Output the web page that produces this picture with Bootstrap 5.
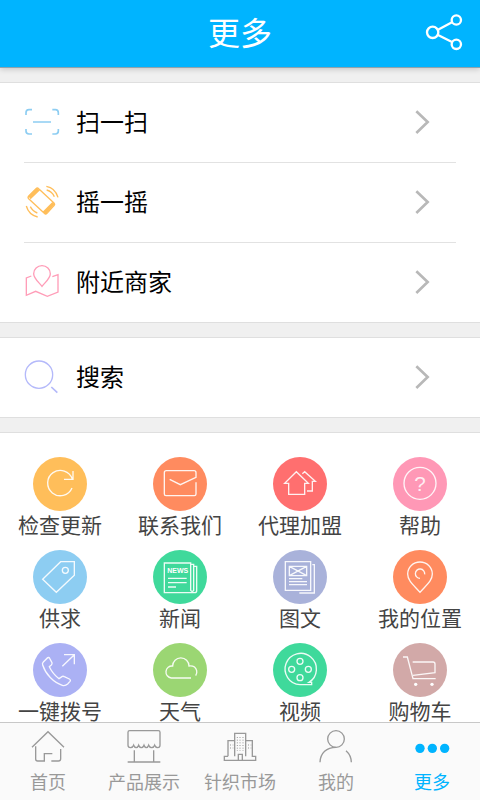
<!DOCTYPE html>
<html lang="zh-CN">
<head>
<meta charset="utf-8">
<meta name="viewport" content="width=device-width, initial-scale=1">
<title>更多</title>
<link href="https://cdn.jsdelivr.net/npm/bootstrap@5.3.0/dist/css/bootstrap.min.css" rel="stylesheet">
<style>
body{font-family:"Liberation Sans","Noto Sans CJK SC",sans-serif;background:#f0f0f0;color:#000}
a{color:inherit;text-decoration:none}
svg{display:block;flex:none;fill:none;stroke:currentColor;stroke-width:4;overflow:visible}
.topbar{background:#00b4ff;color:#fff;height:68px;border-bottom:1px solid #8fa3ad;box-shadow:0 1px 6px rgba(0,0,0,.2);z-index:1}
.topbar h1{font-size:32px;line-height:40px}
.topbar .side{flex:1 1 0}
.share{color:#fff;margin-right:18px}
.share svg{stroke-width:7}
.scroller{min-height:0;overflow-y:auto;scrollbar-width:none;padding-top:14px}
.scroller::-webkit-scrollbar{display:none}
.panel{background:#fff;border-top:1px solid #dfdfdf;border-bottom:1px solid #dfdfdf;margin-bottom:14px}
.entry{height:79px;margin:0 24px;padding-right:24px;font-size:24px;line-height:32px}
.entry + .entry{height:80px;border-top:1px solid #e2e2e2}
.entry svg{margin-bottom:1px}
.ic{width:36px;height:36px}
.chev{width:18px;height:26px;color:#b8b8b8;stroke-width:8}
.apps{padding:24px 0 12px;row-gap:13px;font-size:21px;line-height:22px;color:#444}
.disc{width:54px;height:54px;color:#fff;stroke-width:4;stroke-opacity:.9;margin-bottom:4px}
.disc text{fill:#fff;stroke:none;font-family:"Liberation Sans",sans-serif}
.tabs{background:#fafafa;border-top:1px solid #c8c8c8;color:#999;font-size:18px;line-height:26px;padding:6px 0 4px}
.tabs .ic{margin-bottom:5px}
.tabs .on{color:#00b4ff}
.c-sky{color:#8dcdf2}.c-amber{color:#ffbe5a}.c-rose{color:#ff9db8}.c-lilac{color:#b4b9fa}
.b-amber{background:#ffbe5a}.b-orange{background:#ff8b5f}.b-red{background:#ff6f6f}.b-pink{background:#ff98b6}
.b-sky{background:#8dcdf2}.b-green{background:#3fd99b}.b-blue{background:#a9b2da}.b-lilac{background:#abb1f4}
.b-lime{background:#9bd673}.b-dust{background:#d2a9a8}
</style>
</head>
<body>
<div class="vh-100 d-flex flex-column">
<header class="topbar d-flex align-items-center flex-shrink-0 position-relative">
  <div class="side"></div>
  <h1 class="m-0 fw-normal">更多</h1>
  <div class="side d-flex justify-content-end">
    <button type="button" class="share btn p-0 border-0 mb-1" aria-label="分享">
      <svg class="ic" viewBox="738 42 108 108"><circle cx="758" cy="97" r="17"/><circle cx="829" cy="60" r="14"/><circle cx="829" cy="133" r="14"/><path d="M774 89 816 67M774 105l42 21"/></svg>
    </button>
  </div>
</header>

<main class="scroller flex-grow-1">
  <section class="panel">
    <a href="#scan" class="entry d-flex align-items-center">
      <svg class="ic c-sky me-3" viewBox="72 42 108 108"><path stroke-width="5" d="M78 75V68Q78 59 87 59H96M157 59H166Q175 59 175 68V75M175 117V123Q175 132 166 132H157M96 132H87Q78 132 78 123V117M99 96H153"/></svg>
      <span class="flex-grow-1">扫一扫</span>
      <svg class="chev" viewBox="102 55 54 78"><path d="M109 62 143 94 109 127"/></svg>
    </a>
    <a href="#shake" class="entry d-flex align-items-center">
      <svg class="ic c-amber me-3" viewBox="72 282 108 108"><path d="M87 317 108 296Q112 292 116 296L162 339Q166 343 162 347L141 370Q137 374 133 370L86 326Q82 322 87 317Z"/><path fill="currentColor" stroke="none" d="M85 319 110 294 120 301 92 328ZM128 365 157 336 165 343 137 373Z"/><path d="M139 289Q165 293 174 322M140 300Q157 305 163 320M79 348Q86 374 113 381M91 350Q98 364 112 369"/></svg>
      <span class="flex-grow-1">摇一摇</span>
      <svg class="chev" viewBox="102 55 54 78"><path d="M109 62 143 94 109 127"/></svg>
    </a>
    <a href="#nearby" class="entry d-flex align-items-center">
      <svg class="ic c-rose me-3" viewBox="72 72 108 108"><path d="M126 139C116 126 101 115 101 101A25 24 0 0 1 151 101C151 115 136 126 126 139ZM94 108 79 114V166L107 154 142 169 174 156V104L157 110"/></svg>
      <span class="flex-grow-1">附近商家</span>
      <svg class="chev" viewBox="102 55 54 78"><path d="M109 62 143 94 109 127"/></svg>
    </a>
  </section>

  <section class="panel">
    <a href="#search" class="entry d-flex align-items-center">
      <svg class="ic c-lilac me-3" viewBox="72 357 108 108"><circle cx="117" cy="404" r="41"/><path stroke-width="5" d="M154 441 172 458"/></svg>
      <span class="flex-grow-1">搜索</span>
      <svg class="chev" viewBox="102 55 54 78"><path d="M109 62 143 94 109 127"/></svg>
    </a>
  </section>

  <section class="panel mb-0">
    <div class="apps row row-cols-4 gx-0 text-center text-nowrap">
      <a href="#update" class="col d-flex flex-column align-items-center">
        <svg class="disc rounded-circle b-amber" viewBox="99 51 162 162"><path d="M219 93V118H192M216 144A38 38 0 1 1 217 117"/></svg>检查更新</a>
      <a href="#contact" class="col d-flex flex-column align-items-center">
        <svg class="disc rounded-circle b-orange" viewBox="459 51 162 162"><path d="M588 127V162Q588 167 583 167H498Q493 167 493 162V98Q493 92 499 92H582Q588 92 588 98V112L541 134 509 118"/></svg>联系我们</a>
      <a href="#agent" class="col d-flex flex-column align-items-center">
        <svg class="disc rounded-circle b-red" viewBox="99 51 162 162"><path d="M146 130H134L169 95 205 130H194V163H146ZM187 101 194 95 226 124H217V153H201"/></svg>代理加盟</a>
      <a href="#help" class="col d-flex flex-column align-items-center">
        <svg class="disc rounded-circle b-pink" viewBox="459 51 162 162"><circle cx="540" cy="130" r="48"/><text x="540" y="152" font-size="62" text-anchor="middle" fill-opacity=".85">?</text></svg>帮助</a>

      <a href="#supply" class="col d-flex flex-column align-items-center">
        <svg class="disc rounded-circle b-sky" viewBox="99 30 162 162"><path d="M128 118 182 65H223V106L169 157Z"/><circle cx="196" cy="91" r="9"/></svg>供求</a>
      <a href="#news" class="col d-flex flex-column align-items-center">
        <svg class="disc rounded-circle b-green" viewBox="459 30 162 162"><path d="M572 69H493V158H584Q590 158 590 152V79H581V151Q577 157 572 151ZM572 73H581V80M504 115H560M504 128H560M504 141H528"/><text x="533" y="98" font-size="21" font-weight="700" text-anchor="middle">NEWS</text></svg>新闻</a>
      <a href="#articles" class="col d-flex flex-column align-items-center">
        <svg class="disc rounded-circle b-blue" viewBox="99 30 162 162"><path d="M136 65H212V151H136ZM217 74H223V159H178M148 79H200V107H148ZM148 79 200 107M200 79 148 107M147 116H187M147 125H201M147 134H201"/></svg>图文</a>
      <a href="#location" class="col d-flex flex-column align-items-center">
        <svg class="disc rounded-circle b-orange" viewBox="459 30 162 162"><path d="M540 157C523 137 503 123 503 102A37 36 0 0 1 577 102C577 123 557 137 540 157ZM540 115A14 14 0 1 1 554 103"/></svg>我的位置</a>

      <a href="#dial" class="col d-flex flex-column align-items-center">
        <svg class="disc rounded-circle b-lilac" viewBox="99 27 162 162"><path d="M192 62H223V91M223 62 187 97M143 71Q147 69 149 73L156 86Q157 90 154 93L148 98Q157 118 177 134L187 127Q190 126 193 128L208 135Q213 138 210 142L203 150Q195 157 187 154C160 145 137 121 128 93Q126 88 130 84Z"/></svg>一键拨号</a>
      <a href="#weather" class="col d-flex flex-column align-items-center">
        <svg class="disc rounded-circle b-lime" viewBox="459 27 162 162"><path d="M573 132H514A18 18 0 1 1 518 96A24.500 24.500 0 0 1 567 96Q586 94 590 110 592 118 587 125"/></svg>天气</a>
      <a href="#video" class="col d-flex flex-column align-items-center">
        <svg class="disc rounded-circle b-green" viewBox="99 27 162 162"><path d="M180 152A47 47 0 1 1 207 145H215V152Z"/><circle cx="180" cy="82" r="9"/><circle cx="155" cy="106" r="9"/><circle cx="205" cy="106" r="9"/><circle cx="180" cy="131" r="9"/></svg>视频</a>
      <a href="#cart" class="col d-flex flex-column align-items-center">
        <svg class="disc rounded-circle b-dust" viewBox="459 27 162 162"><path d="M489 69H502L519 134H587M518 84H579Q585 84 585 90V116L519 124"/><g fill="#fff" stroke="none"><circle cx="527" cy="151" r="5"/><circle cx="576" cy="151" r="5"/></g></svg>购物车</a>
    </div>
  </section>
</main>

<nav class="tabs d-flex flex-shrink-0 text-center text-nowrap position-relative">
  <a href="#home" class="col d-flex flex-column align-items-center">
    <svg class="ic" viewBox="90 42 108 108"><path d="M96 97 144 50 192 97M107 94V132Q107 138 113 138H133V116H157M182 102V131Q182 138 175 138H154"/></svg>首页</a>
  <a href="#products" class="col d-flex flex-column align-items-center">
    <svg class="ic" viewBox="378 42 108 108"><path d="M384 91V52Q384 47 389 47H475Q480 47 480 52V91C480 100 467 100 464 91C461 100 449 100 446 91C443 100 435 100 432 91C429 100 419 100 416 91C413 100 404 100 401 91C398 100 384 100 384 91ZM403 106V140M461 106V140M383 141H481"/></svg>产品展示</a>
  <a href="#market" class="col d-flex flex-column align-items-center">
    <svg class="ic" viewBox="666 42 108 108"><path d="M684 124H673V136H767V124H757V77H738M684 124V77H704M704 124V55H737V124M715 136V118H727V136"/><path stroke-width="3" stroke-dasharray="3 5" d="M712 66V108M720 66V108M729 66V108M690 90H700M690 99H700M744 90H754M744 99H754"/></svg>针织市场</a>
  <a href="#mine" class="col d-flex flex-column align-items-center">
    <svg class="ic" viewBox="234 42 108 108"><circle cx="288" cy="72" r="25"/><path d="M240 142C241 114 260 97 288 97M318 107Q334 121 334 142"/></svg>我的</a>
  <a href="#more" class="col d-flex flex-column align-items-center on" aria-current="page">
    <svg class="ic" viewBox="522 42 108 108"><g fill="currentColor" stroke="none"><circle cx="540" cy="100" r="14"/><circle cx="577" cy="100" r="14"/><circle cx="614" cy="100" r="14"/></g></svg>更多</a>
</nav>
</div>
<script src="https://cdn.jsdelivr.net/npm/bootstrap@5.3.0/dist/js/bootstrap.bundle.min.js"></script>
</body>
</html>
